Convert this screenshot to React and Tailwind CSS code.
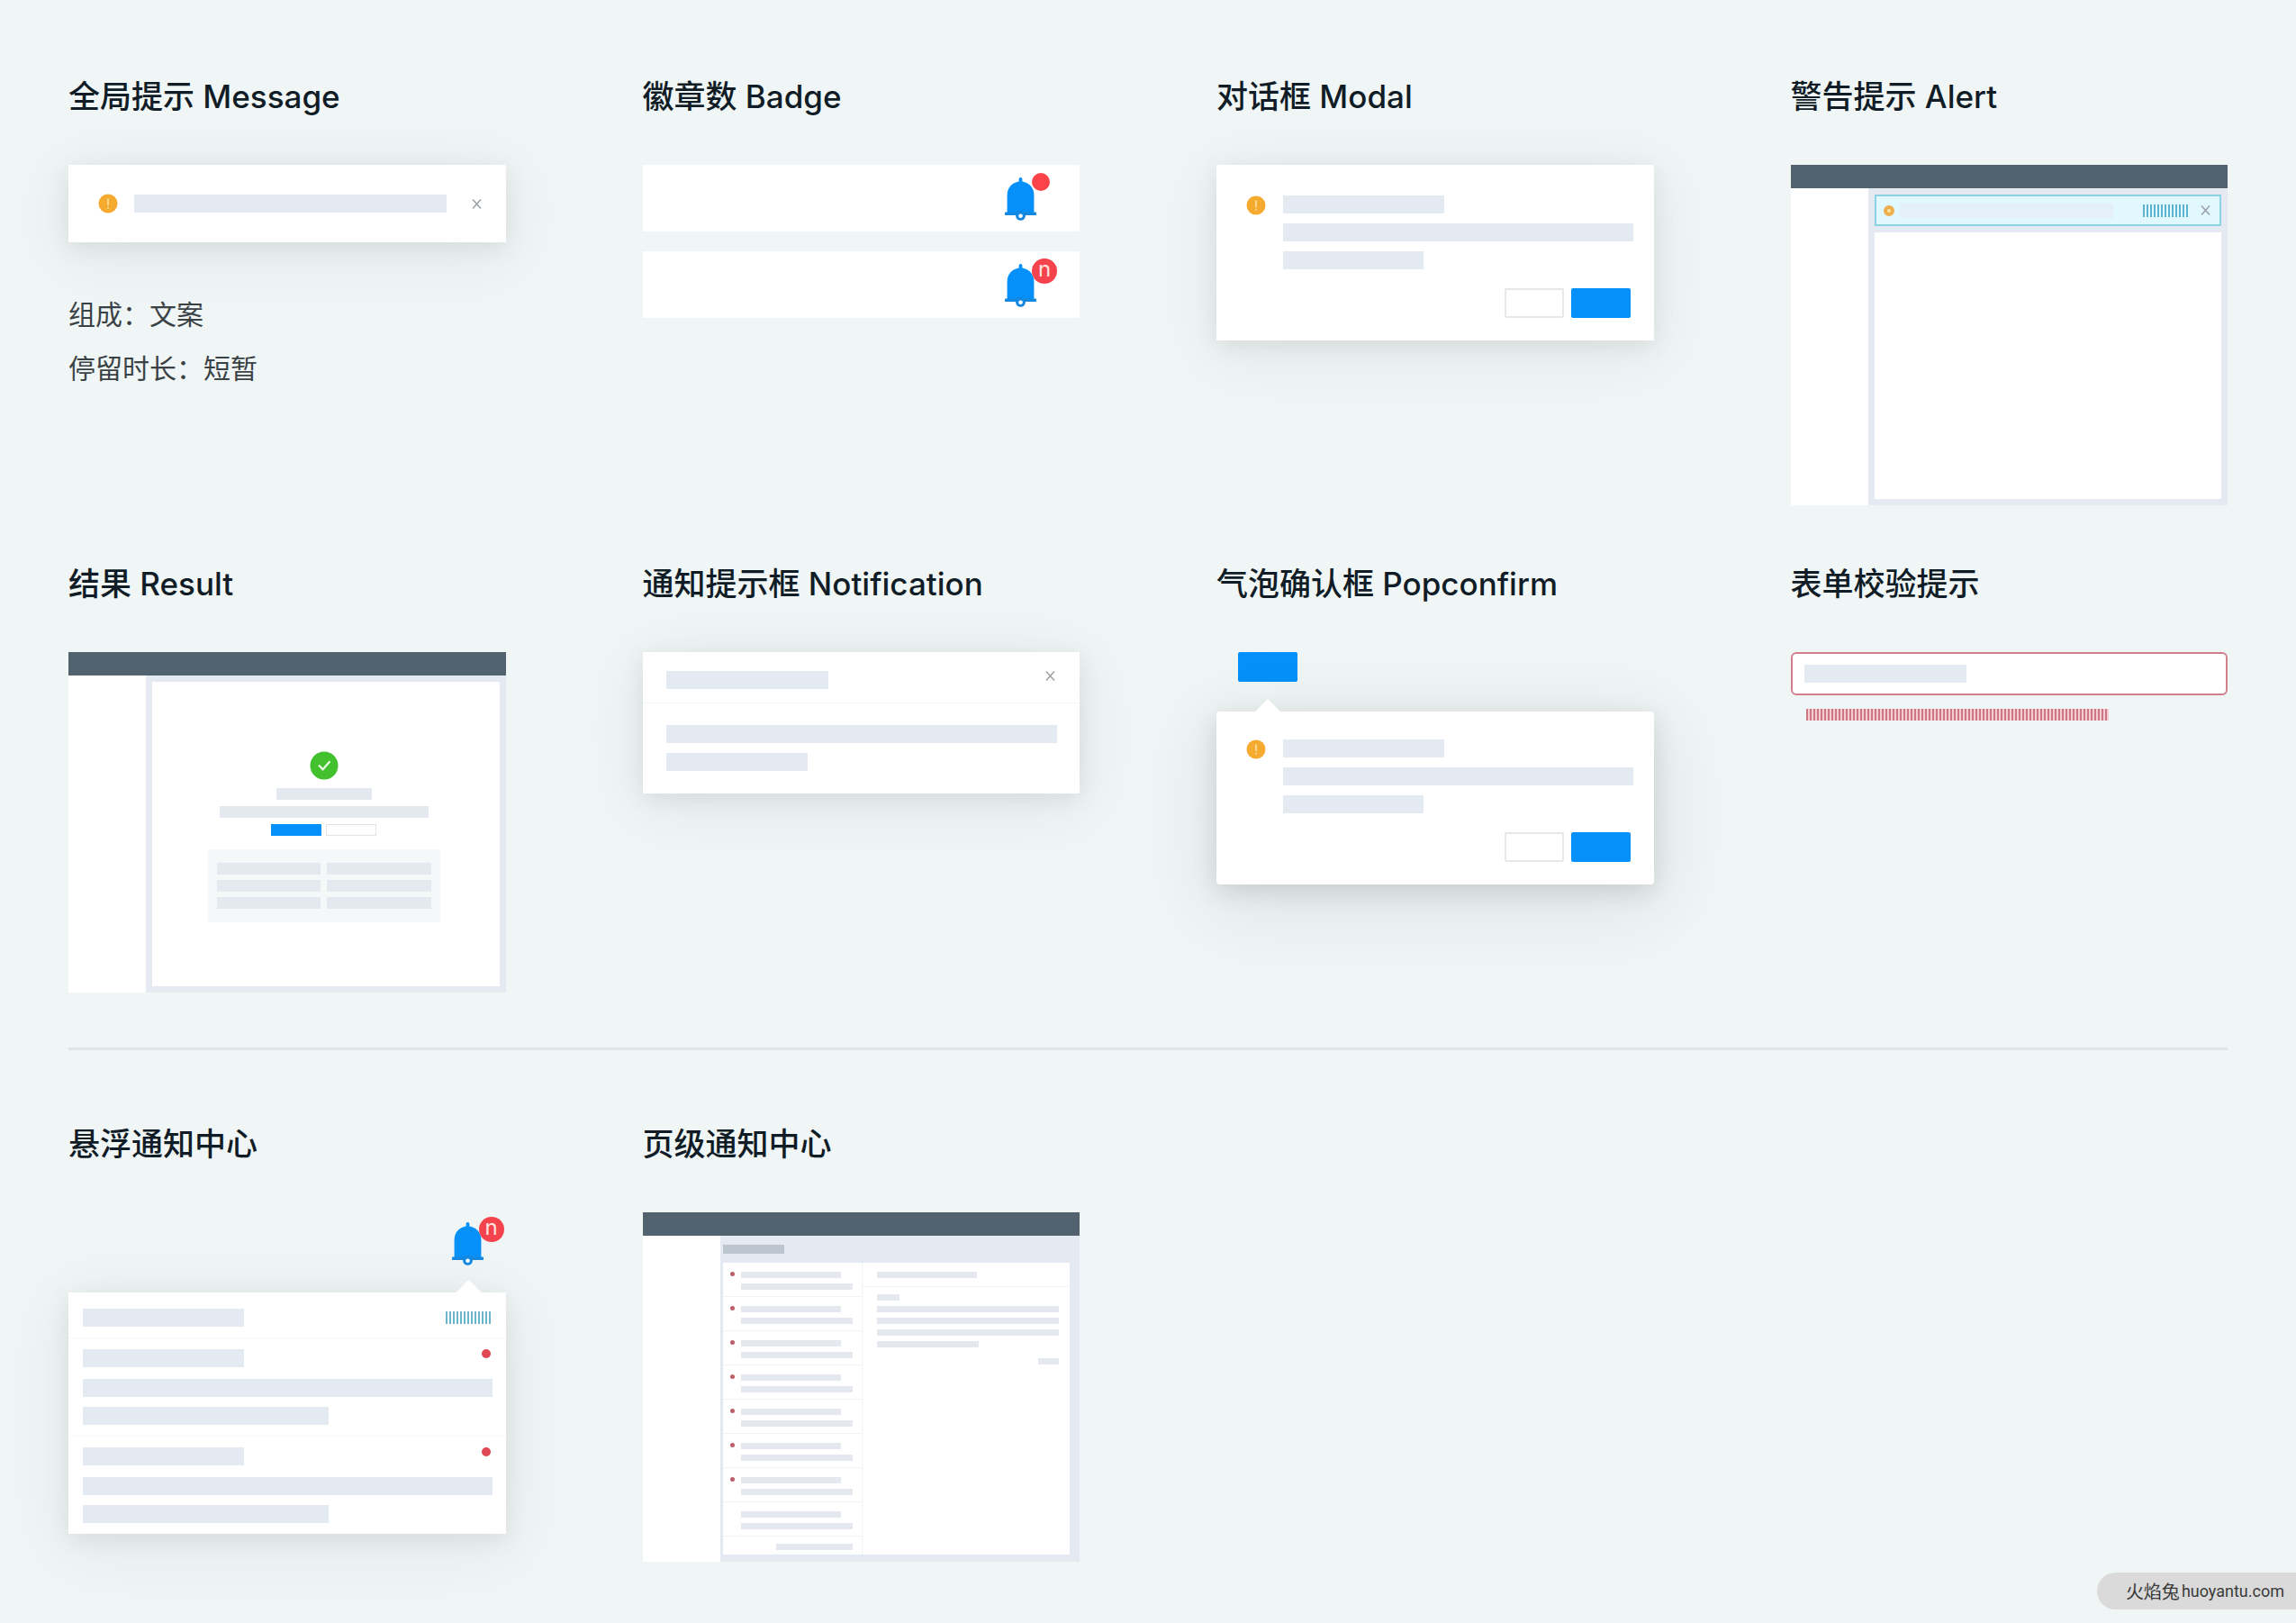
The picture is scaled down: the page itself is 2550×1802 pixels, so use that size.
import clsx from 'clsx'

const Bar = ({ className = '' }) => (
  <div className={clsx('h-5 bg-[#e4eaf2]', className)} />
)

const ThinBar = ({ className = '' }) => (
  <div className={clsx('h-[7px] bg-[#e5e9ef]', className)} />
)

const CloseButton = () => (
  <button type="button" aria-label="关闭" className="shrink-0">
    <svg width="11" height="11" viewBox="0 0 11 11" fill="none" stroke="#989da1" strokeWidth="1.4">
      <path d="M1 0.5 10 10.5M10 0.5 1 10.5" />
    </svg>
  </button>
)

const WarningIcon = () => (
  <svg width="22" height="22" viewBox="0 0 22 22" className="shrink-0">
    <circle cx="11" cy="11" r="10.5" fill="#f5aa30" />
    <path d="M11 5.5v7.5M11 14.8v1.6" stroke="#fde3a8" strokeWidth="1.6" />
  </svg>
)

const Bell = ({ children }) => (
  <div className="relative">
    <svg width="35" height="48" viewBox="0 0 35 48" fill="#0590fa">
      <path d="M15.6 6V2a1.9 1.9 0 0 1 3.8 0v4z" />
      <path d="M2.6 40V19.5C2.6 11 9 4.6 17.5 4.6S32.4 11 32.4 19.5V40z" />
      <rect y="38.4" width="35" height="3.6" rx="0.8" fill="#1488e0" />
      <circle cx="17.5" cy="42.4" r="5.4" fill="#1488e0" />
      <circle cx="17.5" cy="42.8" r="2.3" fill="#fff" />
    </svg>
    {children}
  </div>
)

const DotBadge = () => (
  <span className="absolute -top-[5px] left-[30px] size-5 rounded-full bg-[#fb4349]" />
)

const CountBadge = () => (
  <span className="absolute -top-[6px] left-[30px] flex size-7 items-center justify-center rounded-full bg-[#f4434d] pb-1 text-2xl leading-6 text-[#ffe4e0]">
    n
  </span>
)

const Arrow = ({ className = '' }) => (
  <div className={clsx('h-[14px] w-7 bg-white [clip-path:polygon(50%_0,100%_100%,0_100%)]', className)} />
)

const Card = ({ className = '', children }) => (
  <div
    className={clsx(
      'bg-white shadow-[0_6px_24px_rgba(0,0,0,0.08),0_12px_80px_12px_rgba(0,0,0,0.05)]',
      className
    )}
  >
    {children}
  </div>
)

const Section = ({ title, children }) => (
  <section>
    <h2 className="mb-[52px] text-[35px] leading-[48px] font-medium text-[#101c26]">{title}</h2>
    {children}
  </section>
)

const PrimaryButton = ({ className = '' }) => (
  <button type="button" aria-label="确定" className={clsx('bg-[#0590fa]', className)} />
)

const DefaultButton = ({ className = '' }) => (
  <button type="button" aria-label="取消" className={clsx('bg-white', className)} />
)

// Shared by the modal and the popconfirm
const ConfirmBody = () => (
  <>
    <div className="flex gap-[19px] pr-[23px] pl-[33px]">
      <WarningIcon />
      <div className="flex flex-1 flex-col gap-[11px]">
        <Bar className="w-[179px]" />
        <Bar />
        <Bar className="w-[156px]" />
      </div>
    </div>
    <div className="mt-[21px] flex justify-end gap-2 pr-[26px] pb-[25px]">
      <DefaultButton className="h-[33px] w-[66px] rounded-xs border-2 border-[#e6e8eb]" />
      <PrimaryButton className="h-[33px] w-[66px] rounded-xs" />
    </div>
  </>
)

const Layout = ({ className = '', children }) => (
  <div>
    <div className="h-[26px] bg-[#52636f]" />
    <div className="flex min-h-[352px]">
      <div className="w-[86px] shrink-0 bg-white" />
      <div className={clsx('flex flex-1 flex-col bg-[#e5eaf2]', className)}>{children}</div>
    </div>
  </div>
)

const NoticeItem = ({ last = false }) => (
  <div className={clsx('pt-3 pr-[15px] pb-3 pl-4', !last && 'border-b border-[#f8f9fb]')}>
    <div className="flex items-start justify-between">
      <Bar className="w-[179px]" />
      <span className="mr-[2px] size-[10px] rounded-full bg-[#e14854]" />
    </div>
    <Bar className="mt-[13px]" />
    <Bar className="mt-[11px] w-3/5" />
  </div>
)

const inboxItems = [true, true, true, true, true, true, true, false]

const InboxRow = ({ unread }) => (
  <li className="flex h-[38px] border-b border-[#f1f3f5] pt-[10px] pl-2">
    <span className={clsx('size-[5px] rounded-full', unread && 'bg-[#bd5f69]')} />
    <div className="ml-[7px] flex flex-col gap-[6px]">
      <ThinBar className="w-[111px]" />
      <ThinBar className="w-[124px]" />
    </div>
  </li>
)

export default function App() {
  return (
    <main className="flex min-h-screen flex-col bg-[#f0f6f6] pt-[83px] pb-[15px] font-[Inter,'Noto_Sans_CJK_SC',sans-serif]">
      <div className="grid grid-cols-4 items-start gap-x-[152px] gap-y-[63px] px-[76px]">
        <Section title="全局提示 Message">
          <Card className="flex h-[86px] items-center pr-[27px] pl-[33px]">
            <WarningIcon />
            <Bar className="mr-7 ml-[18px] flex-1" />
            <CloseButton />
          </Card>
          <div className="mt-[50px] text-[30px] leading-[60px] text-[#3a4245]">
            <p>组成：文案</p>
            <p>停留时长：短暂</p>
          </div>
        </Section>

        <Section title="徽章数 Badge">
          <div className="flex flex-col gap-[22px]">
            <div className="flex h-[74px] items-end justify-end bg-white pr-12 pb-3">
              <Bell>
                <DotBadge />
              </Bell>
            </div>
            <div className="flex h-[74px] items-end justify-end bg-white pr-12 pb-3">
              <Bell>
                <CountBadge />
              </Bell>
            </div>
          </div>
        </Section>

        <Section title="对话框 Modal">
          <Card className="pt-[34px]">
            <ConfirmBody />
          </Card>
        </Section>

        <Section title="警告提示 Alert">
          <Layout className="gap-[7px] p-[7px]">
            <div className="flex h-[35px] items-center border-2 border-[#8bd2e3] bg-[#e1f8ff] pr-[10px] pl-2">
              <span className="size-3 rounded-full border-4 border-[#efae4c] bg-[#fbe3a8]" />
              <div className="ml-[6px] h-4 w-[237px] bg-[#e5eff8]" />
              <div className="ml-auto h-[14px] w-[50px] bg-[repeating-linear-gradient(90deg,#5fb3d2_0_2px,transparent_2px_4px)]" />
              <div className="ml-[14px] flex">
                <CloseButton />
              </div>
            </div>
            <div className="flex-1 bg-white" />
          </Layout>
        </Section>

        <Section title="结果 Result">
          <Layout className="p-[7px]">
            <div className="flex flex-1 flex-col items-center bg-white pt-[77px] pr-1">
              <svg width="32" height="32" viewBox="0 0 32 32" fill="none">
                <circle cx="16" cy="16" r="15.5" fill="#42c02e" />
                <path d="M10 15.5l4.5 4.8 8-9" stroke="#eafbe4" strokeWidth="2.2" />
              </svg>
              <div className="mt-[9px] h-[13px] w-[106px] bg-[#e4e9f0]" />
              <div className="mt-[7px] h-[13px] w-[232px] bg-[#e4e9f0]" />
              <div className="mt-[7px] flex gap-[5px]">
                <PrimaryButton className="h-[13px] w-14" />
                <DefaultButton className="h-[13px] w-14 border border-[#dfe2e6]" />
              </div>
              <div className="mt-[15px] grid w-[258px] grid-cols-2 gap-x-[7px] gap-y-[6px] bg-[#f5f8f9] px-[10px] py-[15px]">
                {[1, 2, 3, 4, 5, 6].map((cell) => (
                  <div key={cell} className="h-[13px] bg-[#e4e9f0]" />
                ))}
              </div>
            </div>
          </Layout>
        </Section>

        <Section title="通知提示框 Notification">
          <Card>
            <div className="flex items-start justify-between border-b border-[#f3f5f7] pt-[21px] pr-[27px] pb-[15px] pl-[26px]">
              <Bar className="w-[180px]" />
              <CloseButton />
            </div>
            <div className="flex flex-col gap-[11px] pt-6 pr-[25px] pb-[25px] pl-[26px]">
              <Bar />
              <Bar className="w-[157px]" />
            </div>
          </Card>
        </Section>

        <Section title="气泡确认框 Popconfirm">
          <div className="flex flex-col items-start">
            <PrimaryButton className="ml-6 h-[33px] w-[66px] rounded-xs" />
            <Arrow className="mt-[19px] ml-[43px]" />
            <div className="w-full rounded-sm bg-white pt-[31px] shadow-[0_8px_28px_rgba(0,0,0,0.12),0_18px_90px_16px_rgba(0,0,0,0.07)]">
              <ConfirmBody />
            </div>
          </div>
        </Section>

        <Section title="表单校验提示">
          <label className="flex h-12 items-center rounded-md border-2 border-[#d37f8e] bg-white px-[13px]">
            <Bar className="w-[180px]" />
            <input type="text" aria-label="表单输入" aria-invalid="true" className="min-w-0 flex-1 bg-transparent outline-none" />
          </label>
          <div className="mt-[15px] ml-[17px] h-[13px] w-[336px] bg-[repeating-linear-gradient(90deg,#cd7684_0_2px,#f7cdd3_2px_4px)]" />
        </Section>
      </div>

      <hr className="mx-[76px] mt-[61px] h-[3px] border-0 bg-[#dfe4e5]" />

      <div className="mt-20 grid grid-cols-4 items-start gap-x-[152px] px-[76px]">
        <Section title="悬浮通知中心">
          <div className="flex flex-col items-end">
            <div className="pt-[11px] pr-[25px]">
              <Bell>
                <CountBadge />
              </Bell>
            </div>
            <Arrow className="mt-4 mr-[27px]" />
            <Card className="w-full">
              <div className="flex items-center justify-between border-b border-[#f5f7f9] pt-[18px] pr-[17px] pb-3 pl-4">
                <Bar className="w-[179px]" />
                <div className="h-[14px] w-[50px] bg-[repeating-linear-gradient(90deg,#6fb4cf_0_2px,transparent_2px_4px)]" />
              </div>
              <NoticeItem />
              <NoticeItem last />
            </Card>
          </div>
        </Section>

        <Section title="页级通知中心">
          <Layout className="pr-[11px] pb-2 pl-[3px]">
            <div className="mt-[10px] h-[10px] w-[68px] bg-[#bdc6cf]" />
            <div className="mt-[10px] flex flex-1 bg-white">
              <div className="w-[155px] border-r border-[#f1f3f5]">
                <ul>
                  {inboxItems.map((unread, index) => (
                    <InboxRow key={index} unread={unread} />
                  ))}
                </ul>
                <div className="flex justify-end pt-2 pr-[10px] pb-[5px]">
                  <ThinBar className="w-[85px]" />
                </div>
              </div>
              <div className="flex-1">
                <div className="border-b border-[#f1f3f5] pt-[10px] pb-[9px] pl-4">
                  <ThinBar className="w-[111px]" />
                </div>
                <div className="flex flex-col gap-[6px] pt-2 pr-3 pl-4">
                  <ThinBar className="w-[25px]" />
                  <ThinBar />
                  <ThinBar />
                  <ThinBar />
                  <ThinBar className="w-[113px]" />
                  <ThinBar className="mt-[6px] w-[23px] self-end" />
                </div>
              </div>
            </div>
          </Layout>
        </Section>
      </div>

      <footer className="mt-3 flex h-[41px] items-center gap-[2px] self-end rounded-l-full bg-[#dadada] pr-[13px] pl-8 text-[#3a3a3a]">
        <span className="font-['Noto_Sans_CJK_SC',sans-serif] text-xl">火焰兔</span>
        <span className="font-[Roboto,sans-serif] text-lg">huoyantu.com</span>
      </footer>
    </main>
  )
}
